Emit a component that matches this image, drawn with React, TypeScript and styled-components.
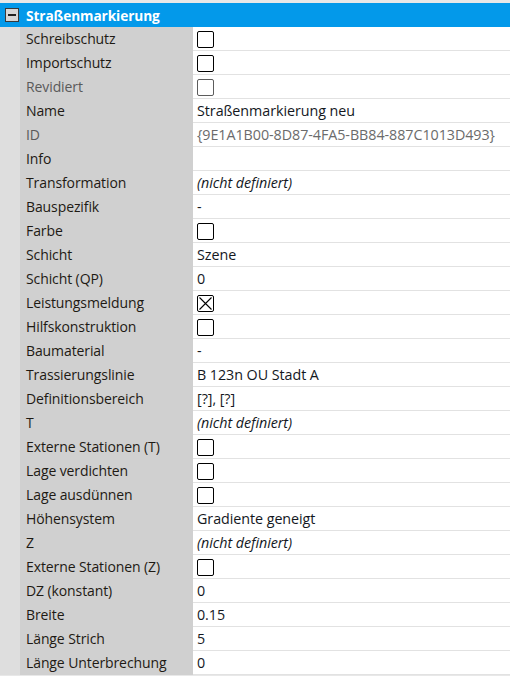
import React from "react";
import styled, { createGlobalStyle } from "styled-components";

const Global = createGlobalStyle`
  html, body { margin: 0; padding: 0; background: #ffffff; }
  body { font-family: "Open Sans", "Noto Sans", sans-serif; }
`;

const Panel = styled.div`
  width: 510px;
  height: 676px;
  overflow: hidden;
  background: #e8e8e8;
  padding-top: 3px;
  box-sizing: border-box;
  display: flex;
  flex-direction: column;
`;

const Header = styled.div`
  height: 24px;
  background: #0399ea;
  display: flex;
  align-items: center;
  gap: 7px;
  padding-left: 5px;
  color: #ffffff;
  font-weight: 700;
  font-size: 13.7px;
  letter-spacing: -0.1px;
  flex-shrink: 0;
`;

const Collapse = styled.div`
  width: 14px;
  height: 14px;
  box-sizing: border-box;
  border: 1px solid #3a3a3a;
  background: #d6d6d6;
  display: flex;
  align-items: center;
  justify-content: center;
  &::after {
    content: "";
    width: 8px;
    height: 2px;
    background: #222;
  }
`;

const Row = styled.div`
  display: grid;
  grid-template-columns: 20px 173px 1fr;
  height: 24px;
  flex-shrink: 0;
`;

const Gutter = styled.div`
  background: #dedede;
`;

const Label = styled.div<{ $dim?: boolean }>`
  background: #d0d0d0;
  padding-left: 6px;
  padding-bottom: 2px;
  box-sizing: border-box;
  display: flex;
  align-items: center;
  font-size: 14px;
  letter-spacing: -0.1px;
  color: ${(p) => (p.$dim ? "#5a5a5a" : "#1e1a14")};
  white-space: nowrap;
`;

const Value = styled.div<{ $tone?: "dim" | "italic" }>`
  background: #ffffff;
  border-bottom: 1px solid #e2e2e2;
  padding-left: 4px;
  padding-bottom: 1px;
  box-sizing: border-box;
  display: flex;
  align-items: center;
  font-size: 14.3px;
  letter-spacing: -0.05px;
  white-space: nowrap;
  color: ${(p) => (p.$tone === "dim" ? "#6b6b6b" : "#14181e")};
  font-style: ${(p) => (p.$tone === "italic" ? "italic" : "normal")};
`;

const Box = styled.div<{ $dim?: boolean }>`
  width: 17px;
  height: 17px;
  box-sizing: border-box;
  border: 1px solid ${(p) => (p.$dim ? "#5c5c5c" : "#000")};
  border-radius: 2px;
  background: #fff;
  display: flex;
  align-items: center;
  justify-content: center;
  margin-top: 2px;
`;

type Item = {
  label: string;
  value?: string;
  check?: "off" | "on" | "dim";
  tone?: "dim" | "italic";
  dimLabel?: boolean;
};

const ND = "(nicht definiert)";

const items: Item[] = [
  { label: "Schreibschutz", check: "off" },
  { label: "Importschutz", check: "off" },
  { label: "Revidiert", check: "dim", dimLabel: true },
  { label: "Name", value: "Straßenmarkierung neu" },
  { label: "ID", value: "{9E1A1B00-8D87-4FA5-BB84-887C1013D493}", tone: "dim", dimLabel: true },
  { label: "Info", value: "" },
  { label: "Transformation", value: ND, tone: "italic" },
  { label: "Bauspezifik", value: "-" },
  { label: "Farbe", check: "off" },
  { label: "Schicht", value: "Szene" },
  { label: "Schicht (QP)", value: "0" },
  { label: "Leistungsmeldung", check: "on" },
  { label: "Hilfskonstruktion", check: "off" },
  { label: "Baumaterial", value: "-" },
  { label: "Trassierungslinie", value: "B 123n OU Stadt A" },
  { label: "Definitionsbereich", value: "[?], [?]" },
  { label: "T", value: ND, tone: "italic" },
  { label: "Externe Stationen (T)", check: "off" },
  { label: "Lage verdichten", check: "off" },
  { label: "Lage ausdünnen", check: "off" },
  { label: "Höhensystem", value: "Gradiente geneigt" },
  { label: "Z", value: ND, tone: "italic" },
  { label: "Externe Stationen (Z)", check: "off" },
  { label: "DZ (konstant)", value: "0" },
  { label: "Breite", value: "0.15" },
  { label: "Länge Strich", value: "5" },
  { label: "Länge Unterbrechung", value: "0" },
];

function Check({ state }: { state: "off" | "on" | "dim" }) {
  return (
    <Box $dim={state === "dim"}>
      {state === "on" && (
        <svg width="15" height="15" viewBox="0 0 15 15">
          <path d="M1.5 1.5 L13.5 13.5 M13.5 1.5 L1.5 13.5" stroke="#000" strokeWidth="1.1" />
        </svg>
      )}
    </Box>
  );
}

export default function App() {
  return (
    <>
      <Global />
      <Panel>
        <Header>
          <Collapse />
          <span>Straßenmarkierung</span>
        </Header>
        {items.map((it) => (
          <Row key={it.label}>
            <Gutter />
            <Label $dim={it.dimLabel}>{it.label}</Label>
            <Value $tone={it.tone}>
              {it.check ? <Check state={it.check} /> : it.value}
            </Value>
          </Row>
        ))}
      </Panel>
    </>
  );
}
